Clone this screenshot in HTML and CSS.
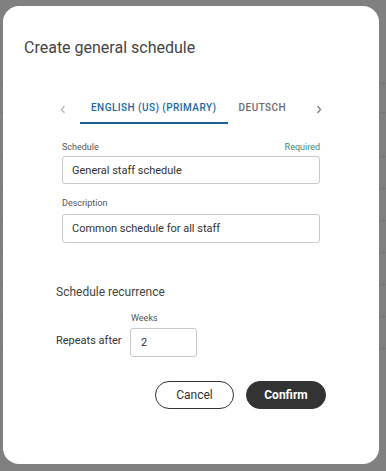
FILE: index.html
```html
<!DOCTYPE html>
<html lang="en">
<head>
    <meta charset="UTF-8">
    <meta name="viewport" content="width=device-width, initial-scale=1.0">
    <title>Create general schedule</title>
    <link rel="stylesheet" href="styles.css">
</head>
<body>

    <!-- dimmed page behind the modal -->
    <div class="page-behind">
        <div class="behind-row first"></div>
        <div class="behind-row tall"></div>
        <div class="behind-row"></div>
        <div class="behind-row"></div>
        <div class="behind-row"></div>
        <div class="behind-row"></div>
        <div class="behind-row"></div>
        <div class="behind-row"></div>
        <div class="behind-row"></div>
    </div>

    <div class="dialog">
        <h2 class="dialog-title">Create general schedule</h2>

        <div class="tabs">
            <button class="tab-arrow disabled">
                <svg width="6" height="9" viewBox="0 0 6 9"><polyline points="4.5,1 1.5,4.5 4.5,8" fill="none" stroke="currentColor" stroke-width="1.2"/></svg>
            </button>
            <button class="tab active">English (US) (Primary)</button>
            <button class="tab">Deutsch</button>
            <span class="tabs-spacer"></span>
            <button class="tab-arrow">
                <svg width="6" height="9" viewBox="0 0 6 9"><polyline points="1.5,1 4.5,4.5 1.5,8" fill="none" stroke="currentColor" stroke-width="1.2"/></svg>
            </button>
        </div>

        <div class="form">
            <div class="field">
                <div class="field-label">
                    <span>Schedule</span>
                    <span class="required">Required</span>
                </div>
                <input type="text" class="text-input" value="General staff schedule">
            </div>

            <div class="field second">
                <div class="field-label">
                    <span>Description</span>
                </div>
                <input type="text" class="text-input" value="Common schedule for all staff">
            </div>
        </div>

        <div class="recurrence">
            <h3 class="recurrence-title">Schedule recurrence</h3>
            <div class="recurrence-row">
                <span class="repeat-label">Repeats after</span>
                <div class="weeks-field">
                    <span class="field-label">Weeks</span>
                    <input type="text" class="text-input weeks-input" value="2">
                </div>
            </div>
        </div>

        <div class="actions">
            <button class="btn btn-outline">Cancel</button>
            <button class="btn btn-dark">Confirm</button>
        </div>
    </div>

</body>
</html>
```

FILE: styles.css
```css
* {
    box-sizing: border-box;
    margin: 0;
    padding: 0;
}

body {
    font-family: Roboto, 'Liberation Sans', sans-serif;
    background-color: #808080;
    color: #333;
    width: 386px;
    height: 471px;
    overflow: hidden;
    position: relative;
}

.page-behind {
    padding-top: 83px;
}

.behind-row {
    height: 32px;
    border-top: 1px solid #767676;
}

.behind-row.first {
    height: 29px;
}

.behind-row.tall {
    height: 44px;
}

.dialog {
    position: absolute;
    top: 6px;
    left: 3px;
    width: 376px;
    height: 458px;
    background: #fff;
    border-radius: 16px;
}

.dialog-title {
    padding: 32px 21px 0;
    font-size: 16px;
    line-height: 20px;
    font-weight: 400;
    color: #444;
}

.tabs {
    display: flex;
    align-items: flex-start;
    margin-top: 44px;
    padding: 0 48px;
}

.tabs button {
    background: none;
    border: none;
    font-family: inherit;
    cursor: pointer;
}

.tab-arrow {
    width: 24px;
    height: 12px;
    display: flex;
    align-items: center;
    justify-content: center;
    color: #777;
    margin-top: 1px;
}

.tab-arrow.disabled {
    color: #b5b5b5;
    margin-right: 5px;
    justify-content: flex-start;
    padding-left: 9px;
}

.tabs .tab {
    font-size: 10px;
    line-height: 12px;
    font-weight: 500;
    letter-spacing: 0.45px;
    text-transform: uppercase;
    color: #6b6b6b;
    padding: 0 11px 8px;
    border-bottom: 2px solid transparent;
}

.tabs .tab.active {
    color: #2169a3;
    border-bottom-color: #1c5f96;
}

.tabs-spacer {
    flex: 1;
}

.form {
    padding: 18px 59px 0;
}

.field-label {
    display: flex;
    justify-content: space-between;
    font-size: 9px;
    line-height: 11px;
    color: #555;
    margin-bottom: 3px;
}

.required {
    color: #3b887c;
}

.field.second {
    margin-top: 14px;
}

.field.second .field-label {
    margin-bottom: 5px;
}

.field.second .text-input {
    height: 29px;
}

.text-input {
    display: block;
    width: 100%;
    height: 28px;
    border: 1px solid #c8c8c8;
    border-radius: 3px;
    padding: 0 9px;
    font-family: inherit;
    font-size: 11px;
    color: #333;
    outline: none;
}

.recurrence {
    padding: 42px 0 0 53px;
}

.recurrence-title {
    font-size: 12px;
    line-height: 14px;
    font-weight: 400;
    color: #444;
}

.recurrence-row {
    display: flex;
    align-items: flex-end;
    margin-top: 14px;
}

.repeat-label {
    width: 74px;
    font-size: 11px;
    line-height: 29px;
    margin-bottom: 2px;
    color: #333;
}

.weeks-field .field-label {
    display: block;
    padding-left: 1px;
    margin-bottom: 4px;
}

.weeks-input {
    width: 67px;
    height: 29px;
    padding: 0 10px;
}

.actions {
    display: flex;
    justify-content: flex-end;
    gap: 12px;
    margin-top: 24px;
    padding-right: 53px;
}

.btn {
    height: 28px;
    border-radius: 14px;
    font-family: inherit;
    font-size: 12px;
    cursor: pointer;
}

.btn-outline {
    width: 79px;
    background: #fff;
    color: #333;
    border: 1px solid #333;
}

.btn-dark {
    width: 80px;
    background: #333;
    color: #fff;
    border: 1px solid #333;
    font-weight: 700;
}
```
